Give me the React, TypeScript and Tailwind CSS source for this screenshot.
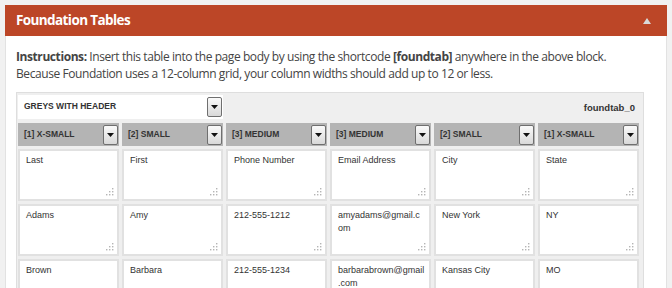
import React from "react";

const headers = ["[1] X-Small", "[2] Small", "[3] Medium", "[3] Medium", "[2] Small", "[1] X-Small"];

const rows = [
  ["Last", "First", "Phone Number", "Email Address", "City", "State"],
  ["Adams", "Amy", "212-555-1212", "amyadams@gmail.c\nom", "New York", "NY"],
  ["Brown", "Barbara", "212-555-1234", "barbarabrown@gmail\n.com", "Kansas City", "MO"],
];

function DropButton() {
  return (
    <div className="flex h-[20px] w-[15px] shrink-0 items-center justify-center rounded-[2px] border border-[#6f6f6f] bg-gradient-to-b from-[#fafafa] to-[#d9d9d9]">
      <svg width="7" height="4" viewBox="0 0 7 4">
        <path d="M0 0h7L3.5 4z" fill="#111" />
      </svg>
    </div>
  );
}

function Grip() {
  return (
    <svg className="absolute bottom-[3px] right-[3px]" width="9" height="9" viewBox="0 0 9 9">
      <g fill="#b5b5b5">
        <rect x="7" y="1" width="1.4" height="1.4" />
        <rect x="4" y="4" width="1.4" height="1.4" />
        <rect x="7" y="4" width="1.4" height="1.4" />
        <rect x="1" y="7" width="1.4" height="1.4" />
        <rect x="4" y="7" width="1.4" height="1.4" />
        <rect x="7" y="7" width="1.4" height="1.4" />
      </g>
    </svg>
  );
}

export default function App() {
  return (
    <div className="h-[288px] w-[672px] overflow-hidden bg-[#f1f1f1] px-[5px] pt-[5px]">
      <div className="flex h-[31px] items-center justify-between bg-[#bc4627] pl-[11px] pr-[16px]">
        <span className="font-['Open_Sans',sans-serif] text-[13.5px] font-bold tracking-[-0.6px] text-white">Foundation Tables</span>
        <svg width="8" height="6" viewBox="0 0 8 6">
          <path d="M0 6L4 0l4 6z" fill="#d9d9d9" />
        </svg>
      </div>
      <div className="h-full border-x border-[#e2e2e2] bg-white px-[10px] pt-[12px]">
        <p className="font-['Open_Sans',sans-serif] text-[12px] leading-[17px] tracking-[-0.42px] text-[#444]">
          <b>Instructions:</b> Insert this table into the page body by using the shortcode <b>[foundtab]</b> anywhere in the above block.
          <br />
          Because Foundation uses a 12-column grid, your column widths should add up to 12 or less.
        </p>
        <div className="mt-[10px] w-[628px] border border-[#dedede] bg-[#efefef] pl-px pr-[4px] pt-[2px] font-['Liberation_Sans',Arial,sans-serif] text-[#333]">
          <div className="flex h-[24px] items-center justify-between">
            <div className="flex h-[24px] w-[205px] items-start justify-between bg-white pl-[6px] pr-px pt-[2px]">
              <span className="pt-[3px] text-[8.5px] font-bold uppercase">Greys with Header</span>
              <DropButton />
            </div>
            <span className="pr-[4px] pt-[3px] text-[9.5px] font-bold">foundtab_0</span>
          </div>
          <div className="mt-[4px] grid w-[621px] grid-cols-6 gap-[3px]">
            {headers.map((h, i) => (
              <div key={i} className="flex h-[23px] items-start justify-between bg-[#b4b4b4] pl-[6px] pr-px pt-[2px]">
                <span className="pt-[3px] text-[8.5px] font-bold uppercase">{h}</span>
                <DropButton />
              </div>
            ))}
          </div>
          <div className="mt-[3px] flex w-[621px] flex-col gap-[3px]">
            {rows.map((r, ri) => (
              <div key={ri} className="grid grid-cols-6 gap-[3px]">
                {r.map((c, ci) => (
                  <div key={ci} className="relative h-[52px] whitespace-pre-line border-2 border-[#e1e1e1] bg-white px-[6px] pt-[3px] text-[9px] leading-[12.5px]">
                    {c}
                    <Grip />
                  </div>
                ))}
              </div>
            ))}
          </div>
        </div>
      </div>
    </div>
  );
}
